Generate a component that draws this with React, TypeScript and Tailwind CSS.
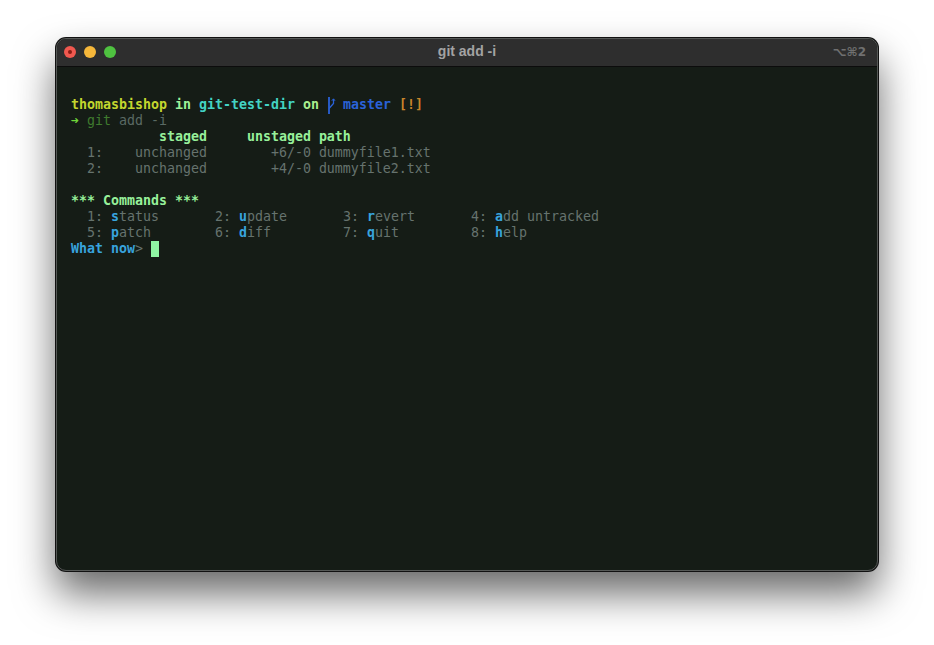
import React from "react";

function BranchIcon() {
  return (
    <svg width="8" height="16" viewBox="0 0 8 16" className="inline-block align-top overflow-visible" fill="none" stroke="#2a62d8">
      <path d="M2 0v17" strokeWidth="1.8" />
      <path d="M6.5 2v4.5L2 11.5" strokeWidth="1.3" />
      <path d="M4.8 3.8L6.5 1.8l1.5 2" strokeWidth="1" />
    </svg>
  );
}

const dim = "text-[#66736e]";
const key = "font-bold text-[#38a3dd]";
const head = "font-bold text-[#97f09a]";

function Command({ n, k, rest }: { n: number; k: string; rest: string }) {
  return (
    <span className="inline-block w-[128px]">
      <span className={dim}>{n}: </span>
      <span className={key}>{k}</span>
      <span className={dim}>{rest}</span>
    </span>
  );
}

export default function App() {
  return (
    <div className="w-[934px] h-[645px] bg-white pt-[38px] pl-[56px] overflow-hidden">
      <div className="w-[822px] h-[533px] rounded-[10px] bg-[#151c16] border border-[#555856] ring-1 ring-[#111] overflow-hidden shadow-[0_22px_40px_rgba(0,0,0,0.6)] flex flex-col">
        <div className="h-[28px] bg-[#2e2e2e] border-b border-[#0c0c0c] flex items-center pb-[2px] pl-[7px] pr-[11px] shrink-0">
          <div className="flex gap-[8px] w-[200px]">
            <span className="w-3 h-3 rounded-full bg-[#f0584f] flex items-center justify-center">
              <span className="w-1 h-1 rounded-full bg-[#8a1c14]" />
            </span>
            <span className="w-3 h-3 rounded-full bg-[#f6b73a]" />
            <span className="w-3 h-3 rounded-full bg-[#4fc240]" />
          </div>
          <div className="flex-1 text-center text-[14px] font-bold text-[#a3a3a3] font-['Liberation_Sans',sans-serif]">git add -i</div>
          <div className="w-[196px] text-right text-[12px] font-bold text-[#707070] font-['DejaVu_Sans',sans-serif]">⌥⌘2</div>
        </div>
        <pre className="pt-[30px] pl-[14px] font-['DejaVu_Sans_Mono',monospace] text-[13.29px] leading-[16px] text-[#66736e]">
          <div className="h-4">
            <span className="font-bold text-[#c3d62e]">thomasbishop</span>{" "}
            <span className="font-bold text-[#9df29a]">in</span>{" "}
            <span className="font-bold text-[#43d3c4]">git-test-dir</span>{" "}
            <span className="font-bold text-[#a9ef8f]">on</span>{" "}
            <BranchIcon />{" "}
            <span className="font-bold text-[#2a62d8]">master</span>{" "}
            <span className="font-bold text-[#c8842a]">[!]</span>
          </div>
          <div className="h-4">
            <span className="font-bold text-[#6fd63a]">➜</span>{" "}
            <span className="text-[#3f7a2e]">git</span>{" "}
            <span className="text-[#5a6a64]">add -i</span>
          </div>
          <div className={head}>{"           staged     unstaged path"}</div>
          <div>{"  1:    unchanged        +6/-0 dummyfile1.txt"}</div>
          <div>{"  2:    unchanged        +4/-0 dummyfile2.txt"}</div>
          <div className="h-4" />
          <div className={head}>*** Commands ***</div>
          <div className="pl-[16px]">
            <Command n={1} k="s" rest="tatus" />
            <Command n={2} k="u" rest="pdate" />
            <Command n={3} k="r" rest="evert" />
            <Command n={4} k="a" rest="dd untracked" />
          </div>
          <div className="pl-[16px]">
            <Command n={5} k="p" rest="atch" />
            <Command n={6} k="d" rest="iff" />
            <Command n={7} k="q" rest="uit" />
            <Command n={8} k="h" rest="elp" />
          </div>
          <div className="flex items-center">
            <span className="font-bold text-[#38a3dd]">What now</span>
            <span>{"> "}</span>
            <span className="w-2 h-4 bg-[#8ff5a3]" />
          </div>
        </pre>
      </div>
    </div>
  );
}
